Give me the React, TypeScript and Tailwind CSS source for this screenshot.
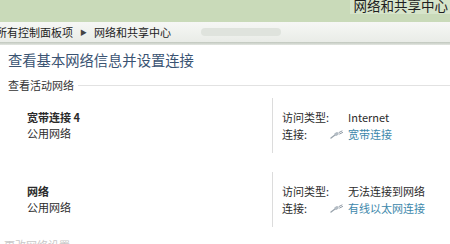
import React from 'react'

const FONT = { fontFamily: '"Noto Sans CJK SC", "Noto Sans", sans-serif' }

function PlugIcon() {
  return (
    <svg width="14" height="9" viewBox="0 0 14 9" className="shrink-0">
      <path d="M1 8 L5 5" stroke="#9aa4ad" strokeWidth="1.4" strokeLinecap="round" />
      <rect x="4.5" y="2.5" width="4" height="3" rx="0.8" transform="rotate(-30 6.5 4)" fill="#b3bcc4" />
      <path d="M9 2.5 L12 1 M9.6 4 L12.6 2.5" stroke="#8f9aa5" strokeWidth="1" strokeLinecap="round" />
    </svg>
  )
}

function NetworkRow({ name, access, link }: { name: string; access: string; link: string }) {
  return (
    <div className="flex h-[55px]">
      <div className="w-[272px] pl-[27px] pt-[11px] text-[11px] leading-[16px] text-[#2b2b2b]">
        <div className="font-bold">{name}</div>
        <div>公用网络</div>
      </div>
      <div className="w-px bg-[#dcdcdc]" />
      <div className="pl-[9px] pt-[11px] text-[11px] leading-[17px] text-[#2b2b2b]">
        <div className="flex">
          <span className="w-[66px]">访问类型:</span>
          <span>{access}</span>
        </div>
        <div className="flex items-center">
          <span className="w-[48px]">连接:</span>
          <PlugIcon />
          <span className="ml-[4px] text-[#3d88ab]">{link}</span>
        </div>
      </div>
    </div>
  )
}

export default function App() {
  return (
    <div className="w-[450px] h-[244px] overflow-hidden bg-white relative" style={FONT}>
      <div className="h-[22px] bg-[#c9dab9] flex justify-end overflow-hidden">
        <div className="bg-[#d6e4ca] pl-[4px] pr-[2px] -mt-[4px] text-[13.5px] leading-[19px] text-[#1f1f1f] h-[18px]">
          网络和共享中心
        </div>
      </div>
      <div className="h-[20px] bg-gradient-to-b from-[#f6f7f5] to-[#e9ece7] flex items-center -ml-[4px] text-[11px] text-[#222]">
        <span>所有控制面板项</span>
        <span className="mx-[7px] text-[7px] text-[#444]">▶</span>
        <span>网络和共享中心</span>
        <span className="ml-[30px] w-[80px] h-[8px] bg-[#dfe3dd] rounded-sm" />
      </div>
      <div className="h-[3px] bg-gradient-to-b from-[#bfc6bc] to-[#e4e7e2]" />
      <div className="pl-[8px] pt-[4px] text-[14.3px] leading-[22px] text-[#3a5372]">查看基本网络信息并设置连接</div>
      <div className="flex items-center pl-[8px] mt-[7px] text-[11px] leading-[14px] text-[#333]">
        <span>查看活动网络</span>
        <div className="flex-1 h-px bg-[#e2e2e2] ml-[4px]" />
      </div>
      <div className="mt-[6px]">
        <NetworkRow name="宽带连接 4" access="Internet" link="宽带连接" />
      </div>
      <div className="mt-[19px]">
        <NetworkRow name="网络" access="无法连接到网络" link="有线以太网连接" />
      </div>
      <div className="mt-[11px] pl-[4px] text-[11px] leading-[14px] text-[#c8c8c8]">更改网络设置</div>
    </div>
  )
}
